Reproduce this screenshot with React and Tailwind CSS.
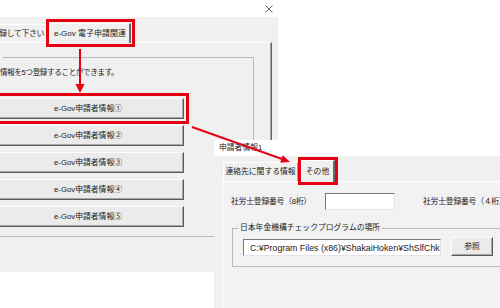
export default function App() {
  const btn =
    "h-[21px] w-[192px] flex items-center justify-center bg-[#ebebeb] border border-t-[#fdfdfd] border-l-[#fdfdfd] border-r-[#5a5a5a] border-b-[#5a5a5a] shadow-[inset_-1px_-1px_0_#a8a8a8]";
  return (
    <div className="relative w-[500px] h-[308px] overflow-hidden bg-white font-['Liberation_Sans','Noto_Sans_CJK_JP',sans-serif] text-[#1a1a1a] text-[7.8px] leading-[10px]">
      {/* left window */}
      <div className="absolute left-[-40px] top-0 w-[318px] flex flex-col">
        <div className="h-[17px] bg-white flex items-center justify-end pr-[5px]">
          <svg width="8" height="8" viewBox="0 0 8 8">
            <path d="M0.5 0.5 L7.5 7.5 M7.5 0.5 L0.5 7.5" stroke="#555" strokeWidth="0.9" fill="none" />
          </svg>
        </div>
        <div className="h-[255px] bg-[#f0f0f0] pt-[6px] flex flex-col">
          <div className="h-[19px] flex items-end">
            <div className="h-[18px] w-[88px] flex items-center justify-end pr-[3px] whitespace-nowrap tracking-[-0.3px] border-t border-t-white border-r border-r-[#a0a0a0]">
              録して下さい
            </div>
            <div className="relative z-10 h-[20px] w-[81px] ml-[2px] -mb-px flex items-center justify-center bg-[#f0f0f0] border-t border-l border-t-white border-l-white border-r-2 border-r-[#696969] outline-3 outline-[#e50012] outline-offset-[1px] whitespace-nowrap text-[8px]">
              e-Gov 電子申請関連
            </div>
          </div>
          <div className="w-[312px] flex-1 border-t border-t-white border-r border-r-[#696969] shadow-[inset_-1px_0_0_#a0a0a0] pt-[9px]">
            <fieldset className="w-[294px] border border-[#b9b9b9] pb-[9px]">
              <legend className="block w-[42px] h-[10px]"></legend>
              <div className="pl-[39px] mt-[6px] h-[10px] whitespace-nowrap text-[7.5px] tracking-[-0.3px]">
                情報を5つ登録することができます。
              </div>
              <div className="ml-[31px] mt-[20px] flex flex-col gap-[6px]">
                <div className={btn + " border-[#3c3c3c] outline-3 outline-[#e50012] outline-offset-[2px]"}>e-Gov申請者情報①</div>
                <div className={btn}>e-Gov申請者情報②</div>
                <div className={btn}>e-Gov申請者情報③</div>
                <div className={btn}>e-Gov申請者情報④</div>
                <div className={btn}>e-Gov申請者情報⑤</div>
              </div>
            </fieldset>
          </div>
        </div>
      </div>

      {/* second window */}
      <div className="absolute left-[214px] top-[140px] w-[300px] h-[168px] flex flex-col">
        <div className="h-[16px] bg-white pl-[5px] flex items-center whitespace-nowrap">申請者情報1</div>
        <div className="flex-1 bg-[#f0f0f0] pt-[4px] flex flex-col">
          <div className="h-[21px] pl-[9px] flex items-end">
            <div className="h-[19px] w-[75px] flex items-center justify-center whitespace-nowrap border-t border-l border-t-white border-l-white border-r border-r-[#a0a0a0]">
              連絡先に関する情報
            </div>
            <div className="relative z-10 h-[22px] w-[34px] ml-[3px] -mb-px flex items-center justify-center bg-[#f0f0f0] border-t border-l border-t-white border-l-white border-r-2 border-r-[#696969] outline-3 outline-[#e50012] whitespace-nowrap">
              その他
            </div>
          </div>
          <div className="ml-[8px] flex-1 border-t border-l border-t-white border-l-white bg-[#f2f2f2] pl-[8px] pt-[11px]">
            <div className="h-[17px] flex items-center whitespace-nowrap">
              <div className="w-[94px] tracking-[-0.2px]">社労士登録番号（8桁）</div>
              <div className="w-[70px] h-[17px] bg-white border border-t-[#7a7a7a] border-l-[#7a7a7a] border-r-[#e3e3e3] border-b-[#e3e3e3]"></div>
              <div className="ml-[28px] tracking-[-0.2px]">社労士登録番号（４桁）</div>
            </div>
            <fieldset className="ml-[1px] mt-[13px] w-[300px] border border-[#b9b9b9] pb-[10px]">
              <legend className="ml-[5px] px-[2px] leading-[10px] whitespace-nowrap">日本年金機構チェックプログラムの場所</legend>
              <div className="pl-[10px] pt-[4px] flex items-end gap-[10px]">
                <div className="w-[198px] h-[17px] bg-white border border-t-[#7a7a7a] border-l-[#7a7a7a] border-r-[#e3e3e3] border-b-[#e3e3e3] pl-[6px] flex items-center overflow-hidden whitespace-nowrap text-[8.8px] text-[#222]">
                  C:¥Program Files (x86)¥ShakaiHoken¥ShSlfChk
                </div>
                <div className="w-[42px] h-[19px] flex items-center justify-center bg-[#ebebeb] border border-t-[#fdfdfd] border-l-[#fdfdfd] border-r-[#5a5a5a] border-b-[#5a5a5a] shadow-[inset_-1px_-1px_0_#a8a8a8]">
                  参照
                </div>
              </div>
            </fieldset>
          </div>
        </div>
      </div>

      {/* arrows */}
      <svg className="absolute inset-0 pointer-events-none z-20" width="500" height="308" viewBox="0 0 500 308">
        <line x1="80" y1="49" x2="80" y2="85" stroke="#e50012" strokeWidth="2" />
        <polygon points="75.5,84 84.5,84 80,93" fill="#e50012" />
        <line x1="192" y1="127" x2="282" y2="159" stroke="#e50012" strokeWidth="2" />
        <polygon points="280.2,162.8 282.8,155.2 290,162" fill="#e50012" />
      </svg>
    </div>
  );
}
